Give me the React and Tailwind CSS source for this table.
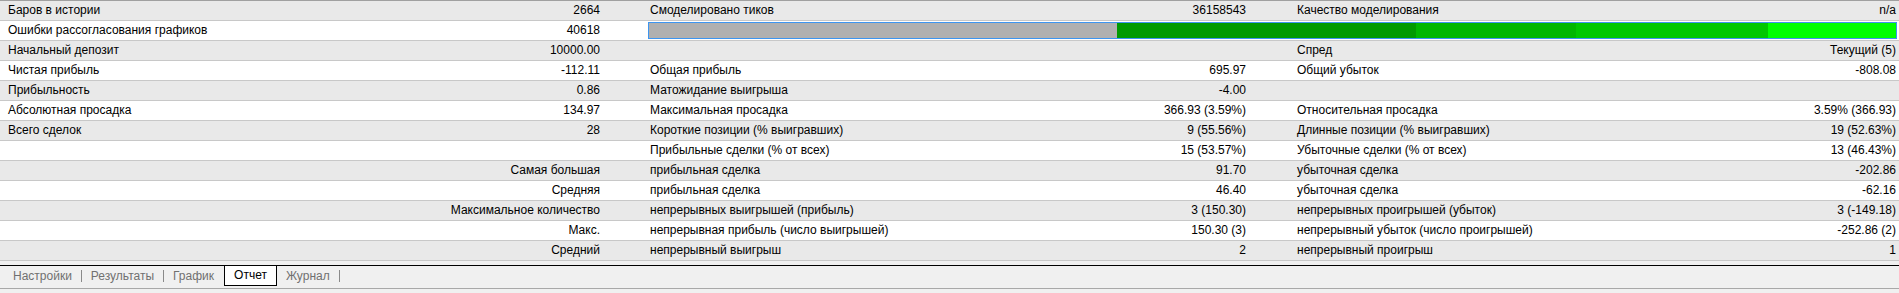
import React from "react";

const rows = [
  { a: ["Баров в истории", "2664"], b: ["Смоделировано тиков", "36158543"], c: ["Качество моделирования", "n/a"] },
  { a: ["Ошибки рассогласования графиков", "40618"], bar: true },
  { a: ["Начальный депозит", "10000.00"], b: ["", ""], c: ["Спред", "Текущий (5)"] },
  { a: ["Чистая прибыль", "-112.11"], b: ["Общая прибыль", "695.97"], c: ["Общий убыток", "-808.08"] },
  { a: ["Прибыльность", "0.86"], b: ["Матожидание выигрыша", "-4.00"], c: ["", ""] },
  { a: ["Абсолютная просадка", "134.97"], b: ["Максимальная просадка", "366.93 (3.59%)"], c: ["Относительная просадка", "3.59% (366.93)"] },
  { a: ["Всего сделок", "28"], b: ["Короткие позиции (% выигравших)", "9 (55.56%)"], c: ["Длинные позиции (% выигравших)", "19 (52.63%)"] },
  { a: ["", ""], b: ["Прибыльные сделки (% от всех)", "15 (53.57%)"], c: ["Убыточные сделки (% от всех)", "13 (46.43%)"] },
  { r: "Самая большая", b: ["прибыльная сделка", "91.70"], c: ["убыточная сделка", "-202.86"] },
  { r: "Средняя", b: ["прибыльная сделка", "46.40"], c: ["убыточная сделка", "-62.16"] },
  { r: "Максимальное количество", b: ["непрерывных выигрышей (прибыль)", "3 (150.30)"], c: ["непрерывных проигрышей (убыток)", "3 (-149.18)"] },
  { r: "Макс.", b: ["непрерывная прибыль (число выигрышей)", "150.30 (3)"], c: ["непрерывный убыток (число проигрышей)", "-252.86 (2)"] },
  { r: "Средний", b: ["непрерывный выигрыш", "2"], c: ["непрерывный проигрыш", "1"] },
];

function Pair({ pair, cls }) {
  return (
    <div className={"flex justify-between whitespace-nowrap " + cls}>
      <span>{pair[0]}</span>
      <span>{pair[1]}</span>
    </div>
  );
}

function QualityBar() {
  return (
    <div className="flex h-[19px] items-center pl-[23px] pr-[2px]">
      <div className="flex h-[17px] w-full border border-[#3d95f0]">
        <div className="w-[468px] bg-[#b0b0b0]" />
        <div className="w-[299px] bg-[#009a00]" />
        <div className="w-[160px] bg-[#00b700]" />
        <div className="w-[192px] bg-[#00c800]" />
        <div className="flex-1 bg-[#00ff00]" />
      </div>
    </div>
  );
}

export default function App() {
  return (
    <div className="w-[1899px] h-[293px] bg-[#f0f0f0] font-['Liberation_Sans',Arial,sans-serif] text-[12px] leading-[19px] text-black overflow-hidden">
      <div className="border-t border-[#a0a0a0]">
        {rows.map((row, i) => (
          <div
            key={i}
            className={
              "grid grid-cols-[625px_647px_627px] h-[20px] border-b border-[#c8c8c8] " +
              (i % 2 === 0 ? "bg-[#e9e9e9]" : "bg-white")
            }
          >
            {row.r ? (
              <div className="text-right pr-[25px] whitespace-nowrap">{row.r}</div>
            ) : (
              <Pair pair={row.a} cls="pl-[8px] pr-[25px]" />
            )}
            {row.bar ? (
              <div className="col-span-2">
                <QualityBar />
              </div>
            ) : (
              <>
                <Pair pair={row.b} cls="pl-[25px] pr-[26px]" />
                <Pair pair={row.c} cls="pl-[25px] pr-[3px]" />
              </>
            )}
          </div>
        ))}
      </div>
      <div className="h-[4px]" />
      <div className="relative h-[24px] border-t border-black border-b border-b-[#a8a8a8] bg-[#f0f0f0] flex items-start text-[#707070]">
        <div className="flex items-center h-[20px] pl-[13px]">
          <span>Настройки</span>
          <span className="mx-[9px] h-[12px] w-px bg-[#8a8a8a]" />
          <span>Результаты</span>
          <span className="mx-[9px] h-[12px] w-px bg-[#8a8a8a]" />
          <span>График</span>
        </div>
        <div className="ml-[10px] -mt-px h-[21px] border border-black bg-white px-[9px] text-black flex items-center">
          Отчет
        </div>
        <div className="flex items-center h-[20px] pl-[9px]">
          <span>Журнал</span>
          <span className="mx-[9px] h-[12px] w-px bg-[#8a8a8a]" />
        </div>
      </div>
    </div>
  );
}
